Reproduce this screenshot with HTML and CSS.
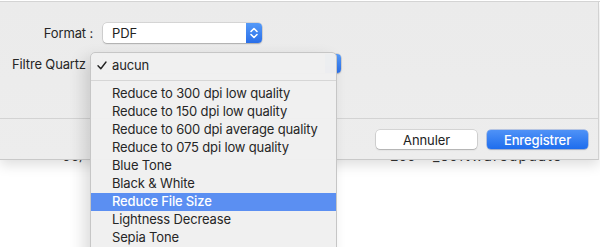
FILE: index.html
```html
<!DOCTYPE html>
<html lang="fr">
<head>
<meta charset="utf-8">
<link rel="stylesheet" href="styles.css">
</head>
<body>
<div class="window">
  <div class="content">
    <div class="filerow"><span class="col-date">00/</span><span class="col-size">200</span><span class="col-name">_softwareupdate</span></div>
  </div>

  <div class="sheet">
    <div class="form">
      <div class="label">Format :</div>
      <div class="popup popup-format">
        <span class="popup-text">PDF</span>
        <span class="stepper">
          <svg width="16" height="20" viewBox="0 0 16 20"><path d="M5 8.5 L8 5.5 L11 8.5 M5 11.5 L8 14.5 L11 11.5" fill="none" stroke="#fff" stroke-width="1.6" stroke-linecap="round" stroke-linejoin="round"/></svg>
        </span>
      </div>
      <div class="label">Filtre Quartz :</div>
      <div class="popup popup-filter">
        <span class="popup-text">aucun</span>
        <span class="stepper"></span>
      </div>
    </div>
    <div class="footer">
      <button class="btn btn-cancel">Annuler</button>
      <button class="btn btn-save">Enregistrer</button>
    </div>
  </div>

  <div class="menu">
    <div class="item checked"><span class="check">
      <svg width="10" height="9" viewBox="0 0 10 9"><path d="M1 4.8 L3.8 7.8 L9 1" fill="none" stroke="#222" stroke-width="1.4" stroke-linecap="round" stroke-linejoin="round"/></svg>
    </span>aucun</div>
    <div class="sep"></div>
    <div class="item">Reduce to 300 dpi low quality</div>
    <div class="item">Reduce to 150 dpi low quality</div>
    <div class="item">Reduce to 600 dpi average quality</div>
    <div class="item">Reduce to 075 dpi low quality</div>
    <div class="item">Blue Tone</div>
    <div class="item">Black &amp; White</div>
    <div class="item active">Reduce File Size</div>
    <div class="item">Lightness Decrease</div>
    <div class="item">Sepia Tone</div>
  </div>
</div>
</body>
</html>
```

FILE: styles.css
```css
html, body {
  margin: 0;
  padding: 0;
  background: #ffffff;
  overflow: hidden;
}
body {
  width: 600px;
  height: 247px;
  font-family: "Inter", "Liberation Sans", sans-serif;
  font-size: 13px;
  letter-spacing: -0.15px;
  color: #262626;
}
.window {
  position: relative;
  width: 600px;
  height: 247px;
  overflow: hidden;
  border-top: 1px solid #d4d4d4;
  margin-top: 1px;
  box-sizing: border-box;
}
.content {
  padding-top: 146px;
}
.filerow {
  display: flex;
  line-height: 16px;
  font-size: 14px;
  color: #333;
}
.col-date { margin-left: 62px; width: 328px; }
.col-size { width: 43px; }
.col-name { letter-spacing: 1.3px; }

.sheet {
  position: absolute;
  top: 0;
  left: 0;
  width: 599px;
  height: 158px;
  box-sizing: border-box;
  background: linear-gradient(#ebebeb, #ededed);
  border-right: 1px solid #d2d2d2;
  border-bottom: 1px solid #c9c9c9;
  box-shadow: 0 5px 12px rgba(0,0,0,0.13);
  display: flex;
  flex-direction: column;
}
.form {
  display: grid;
  grid-template-columns: 93px auto;
  column-gap: 10px;
  row-gap: 11px;
  padding-top: 21px;
  align-items: center;
  justify-items: start;
}
.label {
  justify-self: end;
  white-space: nowrap;
  color: #262626;
}
.popup {
  display: flex;
  align-items: center;
  background: #fff;
  border-radius: 4px;
  box-shadow: 0 0 0 0.5px rgba(0,0,0,0.18), 0 1px 1.5px rgba(0,0,0,0.2);
  box-sizing: border-box;
  overflow: hidden;
}
.popup-format { width: 159px; height: 20px; }
.popup-filter { width: 238px; height: 19px; }
.popup-text {
  flex: 1;
  padding-left: 9px;
  color: #222;
}
.stepper {
  width: 16px;
  height: 100%;
  background: linear-gradient(#559af8, #2a6fe9);
  display: flex;
  align-items: center;
  justify-content: center;
}
.stepper svg { display: block; }

.footer {
  margin-top: 45px;
  border-top: 1px solid #d3d3d3;
  padding: 11px 10px 0 0;
  display: flex;
  justify-content: flex-end;
  gap: 10px;
}
.btn {
  font-family: inherit;
  font-size: 13px;
  letter-spacing: -0.1px;
  width: 101px;
  height: 19px;
  padding: 0;
  border: none;
  border-radius: 4px;
  line-height: 18px;
}
.btn-cancel {
  background: #fff;
  color: #222;
  box-shadow: 0 0 0 0.5px rgba(0,0,0,0.2), 0 1px 1.5px rgba(0,0,0,0.18);
}
.btn-save {
  background: linear-gradient(#4f92f7, #1e6ded);
  color: #fff;
  font-weight: 500;
  box-shadow: 0 0 0 0.5px rgba(20,80,200,0.5), 0 1px 1.5px rgba(0,0,0,0.15);
}

.menu {
  position: absolute;
  left: 90px;
  top: 50px;
  width: 247px;
  height: 230px;
  box-sizing: border-box;
  background: rgba(240,240,240,0.98);
  border: 1px solid #c6c6c6;
  border-radius: 5px;
  padding-top: 3px;
  box-shadow: -6px 6px 16px rgba(0,0,0,0.14);
}
.item {
  height: 18px;
  line-height: 16px;
  padding-left: 21px;
  position: relative;
  white-space: nowrap;
  color: #262626;
}
.item.checked { height: 19px; line-height: 18px; }
.check {
  position: absolute;
  left: 6px;
  top: 5px;
}
.check svg { display: block; }
.sep {
  height: 1px;
  background: #d6d6d6;
  margin: 5px 0 4px;
}
.item.active {
  background: #5b8ff2;
  color: #fff;
  font-weight: 500;
  line-height: 17px;
}
```
